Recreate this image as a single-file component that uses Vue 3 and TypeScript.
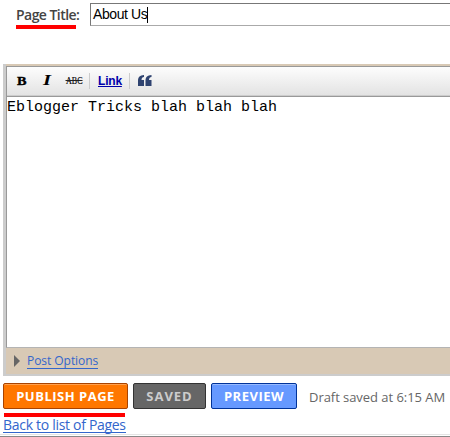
<script setup lang="ts">
import { ref } from 'vue'

const title = ref('About Us')
const body = ref('Eblogger Tricks blah blah blah')
</script>

<template>
  <main class="page">
    <div class="title-row">
      <label class="title-label"><span class="marked">Page Title</span>:</label>
      <div class="title-input"><span class="title-value">{{ title }}</span><i class="caret"></i></div>
    </div>

    <section class="editor">
      <div class="frame">
        <div class="toolbar">
          <svg class="tools" width="90" height="28" viewBox="0 0 90 28">
            <text x="10" y="18" class="bold" textLength="9.500" lengthAdjust="spacingAndGlyphs">B</text>
            <text x="36" y="18" class="italic" textLength="8" lengthAdjust="spacingAndGlyphs">I</text>
            <text x="59" y="17" class="strike" textLength="16.500" lengthAdjust="spacingAndGlyphs">ABC</text>
            <path d="M58.500 13.500h17" stroke="#222" stroke-width="1" />
            <path d="M82.500 6v16" stroke="#ccc" />
          </svg>
          <a class="link">Link</a>
          <i class="divider"></i>
          <svg class="quote" width="14" height="12" viewBox="0 0 14 12">
            <path d="M6 0v2C4.500 2.200 3.600 3 3.500 5H6v6H0V5.500C0 2.200 2 .2 6 0zM13.500 0v2C12 2.200 11.100 3 11 5h2.500v6h-6V5.500c0-3.300 2-5.300 6-5.500z" fill="#2f4370" />
          </svg>
        </div>
        <div class="text">{{ body }}</div>
      </div>
      <div class="options">
        <svg width="6" height="12" viewBox="0 0 6 12"><path d="M0 0l6 6-6 6z" fill="#666" /></svg>
        <a class="options-link">Post Options</a>
      </div>
    </section>

    <div class="actions">
      <button class="btn publish"><span>PUBLISH PAGE</span></button>
      <button class="btn saved"><span>SAVED</span></button>
      <button class="btn preview"><span>PREVIEW</span></button>
      <span class="status">Draft saved at 6:15 AM</span>
    </div>
    <div class="red-line"></div>
    <div class="back-row"><a class="back">Back to list of Pages</a></div>
    <footer class="foot"></footer>
  </main>
</template>

<style>
body { margin: 0; background: #fff; overflow: hidden; }
</style>

<style scoped>
* { box-sizing: border-box; }
.page { width: 450px; height: 437px; overflow: hidden; background: #fff; display: flex; flex-direction: column; font-family: "Open Sans", "Noto Sans", sans-serif; }
.title-row { height: 64px; flex: none; padding-top: 3px; display: flex; }
.title-label { width: 90px; padding-left: 16px; padding-top: 3px; height: 27px; font-size: 14px; line-height: 18px; font-weight: 600; color: #444; letter-spacing: -0.55px; white-space: nowrap; }
.marked { display: inline-block; height: 23px; border-bottom: 4px solid #f00; }
.title-input { flex: 1; height: 23px; border: 1px solid #777; border-right: 0; border-bottom-color: #aaa; display: flex; align-items: center; padding-left: 2px; font: 14px/20px "Liberation Sans", Arial, sans-serif; color: #000; }
.title-value { letter-spacing: -0.42px; white-space: nowrap; margin-top: -1px; }
.caret { width: 1px; height: 16px; background: #000; }
.editor { height: 312px; flex: none; margin-left: 3px; border-left: 3px solid #ccc; border-bottom: 2px solid #ccc; padding-top: 2px; background: #d8c9b5; }
.frame { height: 282px; border: 1px solid #999; border-right: 0; border-bottom-color: #b4b4b4; background: #fff; }
.toolbar { height: 30px; display: flex; border-bottom: 1px solid #999; box-shadow: inset 0 -1px #ccc; background: linear-gradient(#fdfdfd, #e2e2e2); }
.tools { flex: none; }
.bold { font: bold 13px "Liberation Serif", serif; stroke: #000; stroke-width: .4px; }
.italic { font: italic bold 14px "Liberation Serif", serif; }
.strike { font: 10px "Liberation Serif", serif; stroke: #000; stroke-width: .15px; }
.link { margin-left: 1px; width: 24px; padding-top: 7px; font: bold 12px/15px "Liberation Sans", Arial, sans-serif; color: #00a; text-decoration: underline; text-underline-offset: 1px; letter-spacing: -0.2px; }
.divider { width: 1px; height: 16px; margin: 6px 0 0 7px; background: #ccc; }
.quote { margin: 8px 0 0 8px; }
.text { height: 22px; padding-top: 1px; font: 15px/20px "Liberation Mono", "Courier New", monospace; color: #000; white-space: pre; }
.options { height: 26px; display: flex; align-items: center; padding-left: 8px; }
.options-link { margin-left: 7px; font-size: 12px; line-height: 14px; color: #36c; border-bottom: 1px solid #36c; letter-spacing: -0.05px; white-space: nowrap; }
.actions { height: 37px; flex: none; padding: 7px 0 0 3px; display: flex; gap: 5px; }
.btn { height: 26px; flex: none; padding: 0; border: 1px solid; border-radius: 2px; font: bold 13px/22px "Open Sans", sans-serif; letter-spacing: 0.5px; color: #fff; white-space: nowrap; }
.publish { width: 125px; background: #f70; border-color: #a84300; box-shadow: inset 0 1px #ffa04d; }
.saved { width: 73px; background: #666; border-color: #333; color: #ccc; letter-spacing: 1px; }
.preview { width: 86px; background: #69f; border-color: #039; box-shadow: inset 0 1px #9bf; }
.status { margin-left: 7px; padding-top: 5px; font-size: 13px; line-height: 18px; color: #666; letter-spacing: -0.05px; white-space: nowrap; }
.red-line { flex: none; width: 121px; height: 4px; margin-left: 4px; background: #f00; }
.back-row { height: 17px; flex: none; padding-left: 3px; display: flex; }
.back { height: 16px; font-size: 14px; line-height: 16px; color: #36c; border-bottom: 1px solid #36c; letter-spacing: -0.3px; white-space: nowrap; }
.foot { height: 3px; flex: none; border-top: 1px solid #e4e4e4; border-bottom: 1px solid #888; }
</style>
